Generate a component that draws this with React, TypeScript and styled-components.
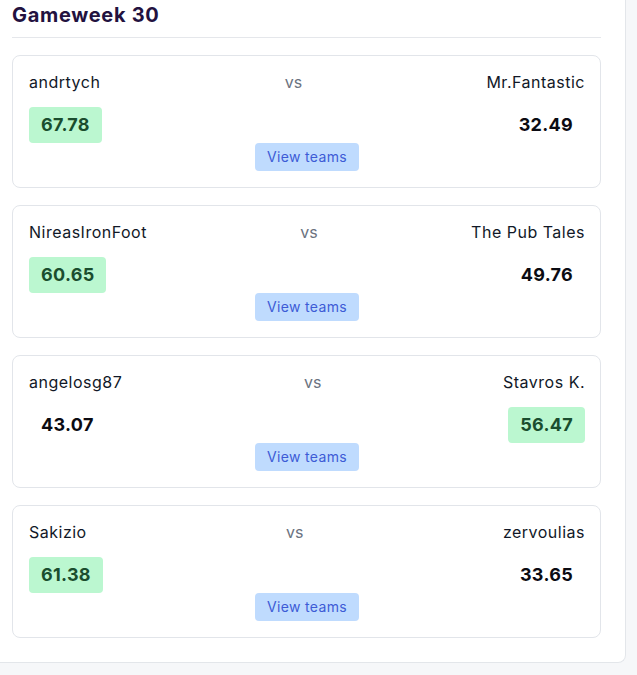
import React from "react";
import styled, { createGlobalStyle } from "styled-components";

const Global = createGlobalStyle`
  html, body { margin: 0; padding: 0; background: #f6f7f9; }
  body { font-family: Inter, "Noto Sans", sans-serif; }
  * { box-sizing: border-box; }
`;

const Page = styled.div`
  width: 637px;
  height: 675px;
  overflow: hidden;
  background: #f6f7f9;
`;

const Panel = styled.section`
  width: 626px;
  background: #ffffff;
  border: 1px solid #e3e6ea;
  border-left: none;
  border-top: none;
  border-radius: 0 0 8px 0;
  padding: 0 24px 24px 12px;
  display: flex;
  flex-direction: column;
`;

const Title = styled.h2`
  margin: 0;
  font-size: 20px;
  line-height: 30px;
  font-weight: 700;
  color: #23123f;
  letter-spacing: 0.7px;
  padding-bottom: 7px;
  border-bottom: 1px solid #e5e7eb;
  margin-bottom: 17px;
`;

const List = styled.div`
  display: flex;
  flex-direction: column;
  gap: 17px;
`;

const Card = styled.div`
  border: 1px solid #e2e5ea;
  border-radius: 8px;
  padding: 16px 15px 16px 16px;
  height: 133px;
  display: flex;
  flex-direction: column;
`;

const Row = styled.div`
  display: flex;
  justify-content: space-between;
  align-items: center;
`;

const Name = styled.span`
  font-size: 16px;
  line-height: 20px;
  color: #111827;
  letter-spacing: 0.5px;
`;

const Vs = styled.span`
  font-size: 16px;
  line-height: 20px;
  color: #6b7280;
`;

const ScoreRow = styled(Row)`
  margin-top: 15px;
`;

const Score = styled.span<{ $win: boolean }>`
  font-size: 18px;
  line-height: 24px;
  font-weight: 700;
  padding: 6px 12px;
  border-radius: 4px;
  letter-spacing: 0.3px;
  color: ${(p) => (p.$win ? "#1a4d2e" : "#0b0b12")};
  background: ${(p) => (p.$win ? "#bbf7d0" : "transparent")};
`;

const ButtonRow = styled.div`
  display: flex;
  justify-content: center;
`;

const ViewButton = styled.button`
  font-family: inherit;
  font-size: 14px;
  line-height: 20px;
  padding: 4px 12px;
  border: none;
  border-radius: 4px;
  letter-spacing: 0.35px;
  background: #bfdbfe;
  color: #3d5bd6;
  cursor: pointer;
`;

const matches = [
  { home: "andrtych", away: "Mr.Fantastic", hs: "67.78", as: "32.49" },
  { home: "NireasIronFoot", away: "The Pub Tales", hs: "60.65", as: "49.76" },
  { home: "angelosg87", away: "Stavros K.", hs: "43.07", as: "56.47" },
  { home: "Sakizio", away: "zervoulias", hs: "61.38", as: "33.65" },
];

export default function App() {
  return (
    <Page>
      <Global />
      <Panel>
        <Title>Gameweek 30</Title>
        <List>
          {matches.map((m) => {
            const homeWin = parseFloat(m.hs) > parseFloat(m.as);
            return (
              <Card key={m.home}>
                <Row>
                  <Name>{m.home}</Name>
                  <Vs>vs</Vs>
                  <Name>{m.away}</Name>
                </Row>
                <ScoreRow>
                  <Score $win={homeWin}>{m.hs}</Score>
                  <Score $win={!homeWin}>{m.as}</Score>
                </ScoreRow>
                <ButtonRow>
                  <ViewButton>View teams</ViewButton>
                </ButtonRow>
              </Card>
            );
          })}
        </List>
      </Panel>
    </Page>
  );
}
